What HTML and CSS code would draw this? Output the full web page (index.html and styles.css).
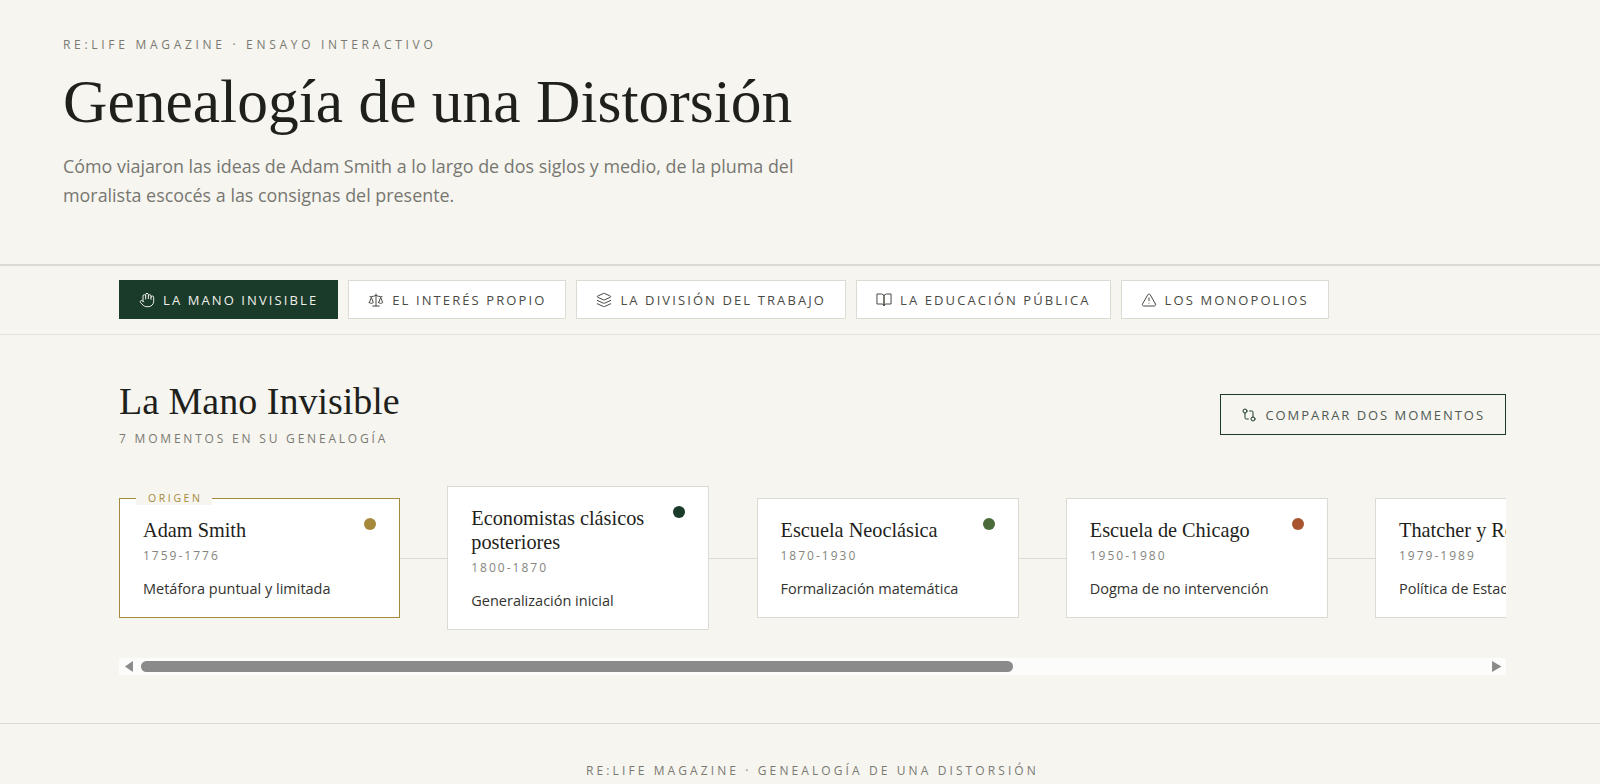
FILE: index.html
```html
<!DOCTYPE html>
<html lang="es">
<head>
    <meta charset="UTF-8">
    <meta name="viewport" content="width=device-width, initial-scale=1.0">
    <title>Genealogía de una Distorsión</title>
    <link rel="stylesheet" href="styles.css">
</head>
<body>
    <header class="site-header">
        <p class="eyebrow">RE:LIFE MAGAZINE · ENSAYO INTERACTIVO</p>
        <h1>Genealogía de una Distorsión</h1>
        <p class="intro">Cómo viajaron las ideas de Adam Smith a lo largo de dos siglos y medio, de la pluma del moralista escocés a las consignas del presente.</p>
    </header>

    <nav class="tabs">
        <button class="tab active">
            <svg class="icon" viewBox="0 0 24 24"><path d="M18 11V6a2 2 0 0 0-2-2a2 2 0 0 0-2 2"/><path d="M14 10V4a2 2 0 0 0-2-2a2 2 0 0 0-2 2v2"/><path d="M10 10.5V6a2 2 0 0 0-2-2a2 2 0 0 0-2 2v8"/><path d="M18 8a2 2 0 1 1 4 0v6a8 8 0 0 1-8 8h-2c-2.8 0-4.5-.86-5.99-2.34l-3.6-3.6a2 2 0 0 1 2.83-2.82L7 15"/></svg>
            LA MANO INVISIBLE
        </button>
        <button class="tab">
            <svg class="icon" viewBox="0 0 24 24"><path d="m16 16 3-8 3 8c-.87.65-1.92 1-3 1s-2.13-.35-3-1Z"/><path d="m2 16 3-8 3 8c-.87.65-1.92 1-3 1s-2.13-.35-3-1Z"/><path d="M7 21h10"/><path d="M12 3v18"/><path d="M3 7h2c2 0 5-1 7-2 2 1 5 2 7 2h2"/></svg>
            EL INTERÉS PROPIO
        </button>
        <button class="tab">
            <svg class="icon" viewBox="0 0 24 24"><path d="m12.83 2.18a2 2 0 0 0-1.66 0L2.6 6.08a1 1 0 0 0 0 1.83l8.58 3.91a2 2 0 0 0 1.66 0l8.58-3.9a1 1 0 0 0 0-1.83Z"/><path d="m22 17.65-9.17 4.16a2 2 0 0 1-1.66 0L2 17.65"/><path d="m22 12.65-9.17 4.16a2 2 0 0 1-1.66 0L2 12.65"/></svg>
            LA DIVISIÓN DEL TRABAJO
        </button>
        <button class="tab">
            <svg class="icon" viewBox="0 0 24 24"><path d="M2 3h6a4 4 0 0 1 4 4v14a3 3 0 0 0-3-3H2z"/><path d="M22 3h-6a4 4 0 0 0-4 4v14a3 3 0 0 1 3-3h7z"/></svg>
            LA EDUCACIÓN PÚBLICA
        </button>
        <button class="tab">
            <svg class="icon" viewBox="0 0 24 24"><path d="m21.73 18-8-14a2 2 0 0 0-3.48 0l-8 14A2 2 0 0 0 4 21h16a2 2 0 0 0 1.73-3"/><path d="M12 9v4"/><path d="M12 17h.01"/></svg>
            LOS MONOPOLIOS
        </button>
    </nav>

    <main class="content">
        <div class="section-head">
            <div>
                <h2>La Mano Invisible</h2>
                <p class="section-sub">7 MOMENTOS EN SU GENEALOGÍA</p>
            </div>
            <button class="compare">
                <svg class="icon" viewBox="0 0 24 24"><circle cx="18" cy="18" r="3"/><circle cx="6" cy="6" r="3"/><path d="M13 6h3a2 2 0 0 1 2 2v7"/><path d="M11 18H8a2 2 0 0 1-2-2V9"/></svg>
                COMPARAR DOS MOMENTOS
            </button>
        </div>

        <div class="timeline">
            <article class="card origin">
                <span class="origin-tag">ORIGEN</span>
                <div class="card-head">
                    <h3>Adam Smith</h3>
                    <span class="dot gold"></span>
                </div>
                <p class="years">1759-1776</p>
                <p class="note">Metáfora puntual y limitada</p>
            </article>
            <div class="link"></div>
            <article class="card">
                <div class="card-head">
                    <h3>Economistas clásicos posteriores</h3>
                    <span class="dot green"></span>
                </div>
                <p class="years">1800-1870</p>
                <p class="note">Generalización inicial</p>
            </article>
            <div class="link"></div>
            <article class="card">
                <div class="card-head">
                    <h3>Escuela Neoclásica</h3>
                    <span class="dot moss"></span>
                </div>
                <p class="years">1870-1930</p>
                <p class="note">Formalización matemática</p>
            </article>
            <div class="link"></div>
            <article class="card">
                <div class="card-head">
                    <h3>Escuela de Chicago</h3>
                    <span class="dot rust"></span>
                </div>
                <p class="years">1950-1980</p>
                <p class="note">Dogma de no intervención</p>
            </article>
            <div class="link"></div>
            <article class="card">
                <div class="card-head">
                    <h3>Thatcher y Reagan</h3>
                    <span class="dot rust"></span>
                </div>
                <p class="years">1979-1989</p>
                <p class="note">Política de Estado</p>
            </article>
        </div>

        <div class="scrollbar">
            <span class="arrow left"></span>
            <div class="track"><div class="thumb"></div></div>
            <span class="arrow right"></span>
        </div>
    </main>

    <footer class="site-footer">RE:LIFE MAGAZINE · GENEALOGÍA DE UNA DISTORSIÓN</footer>
</body>
</html>
```

FILE: styles.css
```css
* {
    margin: 0;
    padding: 0;
    box-sizing: border-box;
}

html, body {
    height: 784px;
    overflow: hidden;
}

body {
    background: #f6f5f0;
    color: #1f1f1c;
    font-family: 'Open Sans', 'Noto Sans', sans-serif;
}

.site-header {
    height: 266px;
    padding: 37px 63px 0;
    border-bottom: 2px solid #dcdbd3;
}

.eyebrow {
    font-size: 12px;
    line-height: 16px;
    letter-spacing: 3.7px;
    color: #7a7a72;
}

h1 {
    margin-top: 14px;
    font-family: 'Liberation Serif', serif;
    font-weight: 400;
    font-size: 61.5px;
    line-height: 68px;
    color: #1f1f1c;
}

.intro {
    margin-top: 17px;
    width: 760px;
    font-size: 17.9px;
    line-height: 29px;
    color: #777770;
}

.tabs {
    display: flex;
    gap: 10px;
    height: 69px;
    padding: 14px 119px;
    border-bottom: 1px solid #e3e2da;
}

.tab {
    display: flex;
    align-items: center;
    gap: 8px;
    height: 39px;
    padding: 0 19px;
    background: #fff;
    border: 1px solid #dcdbd3;
    color: #4a4a45;
    font-family: inherit;
    font-size: 13px;
    letter-spacing: 2.1px;
    white-space: nowrap;
}

.tab.active {
    background: #1a3a2a;
    border-color: #1a3a2a;
    color: #f0f0ea;
}

.icon {
    width: 16px;
    height: 16px;
    flex: none;
    fill: none;
    stroke: currentColor;
    stroke-width: 1.5;
    stroke-linecap: round;
    stroke-linejoin: round;
}

.content {
    padding: 0 94px 0 119px;
}

.section-head {
    display: flex;
    justify-content: space-between;
    align-items: flex-start;
    height: 151px;
    padding-top: 43px;
}

h2 {
    font-family: 'Liberation Serif', serif;
    font-weight: 400;
    font-size: 38px;
    line-height: 46px;
}

.section-sub {
    margin-top: 7px;
    font-size: 12px;
    line-height: 16px;
    letter-spacing: 2.8px;
    color: #7a7a72;
}

.compare {
    display: flex;
    align-items: center;
    gap: 8px;
    height: 41px;
    margin-top: 16px;
    padding: 0 20px;
    background: transparent;
    border: 1px solid #1a3a2a;
    color: #4f5a54;
    font-family: inherit;
    font-size: 13px;
    letter-spacing: 1.95px;
}

.compare .icon {
    stroke: #1a3a2a;
}

.timeline {
    display: flex;
    align-items: center;
    height: 144px;
    overflow: hidden;
}

.card {
    position: relative;
    flex: 0 0 262px;
    padding: 19px 23px 18px;
    background: #fff;
    border: 1px solid #dcdbd3;
}

.card.origin {
    flex-basis: 281px;
    border-color: #a68a3c;
}

.origin-tag {
    position: absolute;
    top: -8px;
    left: 16px;
    padding: 0 9px 0 12px;
    background: #f6f5f0;
    font-size: 10.5px;
    line-height: 14px;
    letter-spacing: 2.6px;
    color: #a68a3c;
}

.card-head {
    display: flex;
    justify-content: space-between;
    align-items: flex-start;
    gap: 16px;
}

h3 {
    font-family: 'Liberation Serif', serif;
    font-weight: 400;
    font-size: 20.3px;
    line-height: 24px;
    color: #1f1f1c;
}

.dot {
    flex: none;
    width: 12px;
    height: 12px;
    border-radius: 50%;
}

.dot.gold { background: #a68a3c; }
.dot.green { background: #1a3a2a; }
.dot.moss { background: #4a6b3a; }
.dot.rust { background: #a8552f; }

.years {
    margin-top: 6px;
    font-size: 12px;
    line-height: 16px;
    letter-spacing: 2px;
    color: #85857d;
}

.note {
    margin-top: 15px;
    font-size: 14.5px;
    line-height: 20px;
    color: #33332f;
    white-space: nowrap;
}

.link {
    flex: 0 0 47.25px;
    height: 1px;
    background: #dcdbd3;
}

.scrollbar {
    display: flex;
    align-items: center;
    height: 17px;
    margin-top: 28px;
    background: #fcfcfb;
}

.arrow {
    flex: none;
    width: 17px;
    height: 11px;
    background: #8a8a8a;
}

.arrow.left {
    clip-path: polygon(35% 50%, 82% 0, 82% 100%);
}

.arrow.right {
    clip-path: polygon(73% 50%, 18% 0, 18% 100%);
}

.track {
    flex: 1;
    padding-left: 5px;
}

.thumb {
    width: 872px;
    height: 11px;
    border-radius: 6px;
    background: #8a8a8a;
}

.site-footer {
    margin-top: 48px;
    padding: 39px 94px 0 119px;
    border-top: 1px solid #dcdbd3;
    text-align: center;
    font-size: 12px;
    line-height: 16px;
    letter-spacing: 3.1px;
    color: #7a7a72;
}
```
